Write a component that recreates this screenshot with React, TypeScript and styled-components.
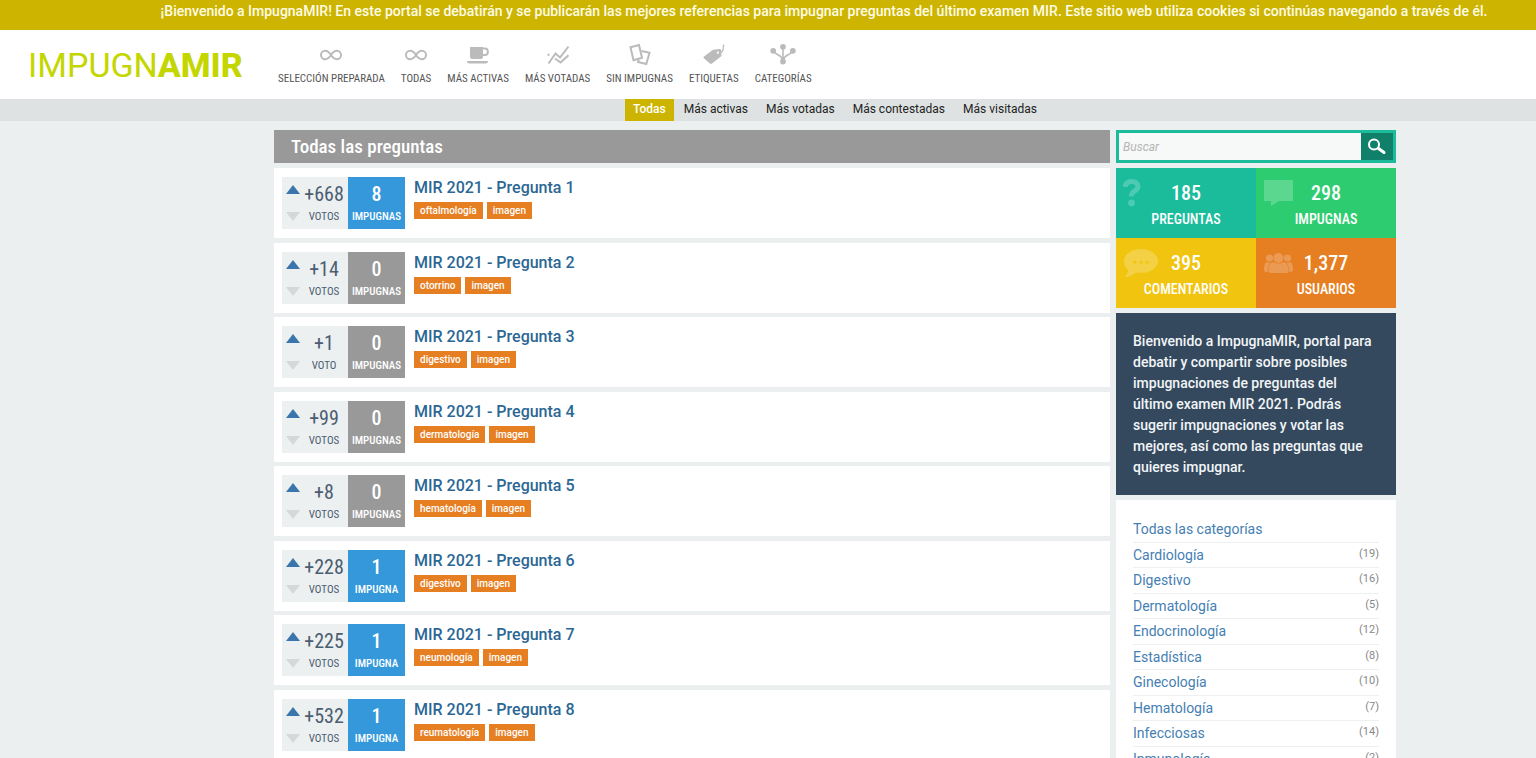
import React from "react";
import styled, { createGlobalStyle } from "styled-components";

const condensed = `"Roboto Condensed", "Liberation Sans Narrow", Roboto, sans-serif`;

const GlobalStyle = createGlobalStyle`
  * { box-sizing: border-box; }
  body {
    margin: 0;
    background: #ebeff0;
    color: #34495e;
    font-family: Roboto, "Liberation Sans", sans-serif;
    font-size: 14px;
  }
  a { text-decoration: none; color: inherit; }
  ul { list-style: none; margin: 0; padding: 0; }
  button { border: 0; padding: 0; cursor: pointer; font: inherit; }
  svg { display: block; }
`;

const Screen = styled.div`
  height: 100vh;
  overflow: hidden;
`;

const Notice = styled.p`
  margin: 0;
  height: 30px;
  padding-left: 112px;
  background: #ccb400;
  color: #fffce6;
  font-size: 14px;
  font-weight: 500;
  line-height: 22px;
  text-align: center;
  white-space: nowrap;
`;

const Header = styled.header`
  display: flex;
  align-items: center;
  height: 69px;
  padding-left: 28px;
  gap: 36px;
  background: #fff;
`;

const Logo = styled.a`
  width: 214px;
  color: #c4d600;
  font-size: 34px;
  line-height: 40px;
  font-weight: 400;
  white-space: nowrap;
  b { font-weight: 800; }
`;

const MainNav = styled.nav`
  display: flex;
  gap: 16px;
`;

const NavLink = styled.a`
  display: flex;
  flex-direction: column;
  align-items: center;
  gap: 4px;
  color: #555;
  font-family: ${condensed};
  font-size: 11px;
  line-height: 16px;
  text-transform: uppercase;
  white-space: nowrap;
  svg { color: #bbb; }
`;

const SubBar = styled.div`
  height: 22px;
  background: #dfe2e3;
`;

const Container = styled.div`
  max-width: 1256px;
  margin: 0 auto;
  padding-left: 134px;
`;

const Tabs = styled.nav`
  display: flex;
  justify-content: center;
  gap: 2px;
`;

const Tab = styled.a<{ $active?: boolean }>`
  padding: 0 8px 2px;
  font-size: 12px;
  line-height: 20px;
  background: ${(p) => (p.$active ? "#ccb400" : "transparent")};
  color: ${(p) => (p.$active ? "#fff" : "#222")};
  font-weight: ${(p) => (p.$active ? 500 : 400)};
`;

const Columns = styled.div`
  display: grid;
  grid-template-columns: 1fr 280px;
  gap: 6px;
  align-items: start;
  padding-top: 9px;
`;

const Heading = styled.h1`
  margin: 0 0 5px;
  padding-left: 17px;
  background: #999;
  color: #fff;
  font-family: ${condensed};
  font-size: 19px;
  font-weight: 500;
  line-height: 33px;
`;

const Question = styled.li`
  display: flex;
  align-items: flex-start;
  height: 70px;
  margin-bottom: 5px;
  padding: 9px 8px;
  background: #fff;
  &:nth-child(even) { margin-bottom: 4px; }
`;

const Votes = styled.div`
  display: flex;
  width: 66px;
  height: 52px;
  padding-left: 4px;
  background: #ecf0f1;
`;

const Arrows = styled.div`
  display: flex;
  flex-direction: column;
  justify-content: space-between;
  padding: 8px 0;
`;

const Arrow = styled.button<{ $down?: boolean }>`
  display: block;
  background: none;
  color: ${(p) => (p.$down ? "#d5d8d9" : "#3a76ac")};
`;

const Counter = styled.div<{ $bg?: string }>`
  display: flex;
  flex-direction: column;
  align-items: center;
  width: ${(p) => (p.$bg ? "57px" : "48px")};
  height: 52px;
  padding-top: 5px;
  background: ${(p) => p.$bg || "transparent"};
  color: ${(p) => (p.$bg ? "#fff" : "#4b5d70")};
  font-family: ${condensed};
  font-size: 11px;
  font-weight: ${(p) => (p.$bg ? 500 : 400)};
  line-height: 22px;
  strong {
    font-size: 20px;
    font-weight: inherit;
    line-height: 24px;
  }
`;

const Summary = styled.div`
  padding: 1px 0 0 9px;
`;

const Title = styled.h2`
  margin: 0 0 4px;
  color: #2b6794;
  font-size: 16px;
  font-weight: 500;
  line-height: 20px;
`;

const Tags = styled.div`
  display: flex;
  gap: 4px;
`;

const Tag = styled.a`
  padding: 0 6px;
  background: #e67e22;
  color: #fff;
  font-size: 10px;
  font-weight: 500;
  line-height: 17px;
`;

const Aside = styled.aside`
  display: flex;
  flex-direction: column;
  gap: 5px;
`;

const Search = styled.form`
  display: flex;
  height: 33px;
  border: 3px solid #1cbb9b;
  background: #f7f8f8;
  input {
    flex: 1;
    min-width: 0;
    border: 0;
    padding: 0 4px;
    background: none;
    font: italic 12px Roboto, sans-serif;
  }
  input::placeholder { color: #b5b5b5; }
  button {
    display: grid;
    place-items: center;
    width: 32px;
    background: #10806a;
    color: #fff;
  }
`;

const Stats = styled.div`
  display: grid;
  grid-template-columns: 1fr 1fr;
`;

const Stat = styled.div<{ $bg: string }>`
  position: relative;
  height: 70px;
  padding-top: 12px;
  background: ${(p) => p.$bg};
  color: #fff;
  font-family: ${condensed};
  font-size: 14px;
  font-weight: 500;
  line-height: 26px;
  text-align: center;
  text-transform: uppercase;
  strong {
    display: block;
    font-size: 20px;
    font-weight: 500;
  }
  svg {
    position: absolute;
    left: 7px;
    top: 9px;
    opacity: 0.22;
  }
`;

const Welcome = styled.p`
  margin: 0;
  padding: 18px 17px 17px;
  background: #34495e;
  color: #f2f5f7;
  font-size: 14px;
  font-weight: 500;
  line-height: 21px;
`;

const Categories = styled.ul`
  padding: 17px;
  background: #fff;
`;

const Category = styled.li`
  display: flex;
  justify-content: space-between;
  height: 26px;
  border-bottom: 1px solid #ecf0f1;
  color: #4580b3;
  font-size: 14px;
  line-height: 25px;
  &:nth-child(even) { height: 25px; }
  span {
    color: #888;
    font-size: 11px;
    line-height: 21px;
  }
`;

const stroke = { fill: "none", stroke: "currentColor", strokeWidth: 2 } as const;

const InfinityIcon = () => (
  <svg width="24" height="24" viewBox="0 0 24 24" aria-hidden="true">
    <path {...stroke} d="M12 12C9.500 8.300 7.800 7.800 6.200 7.800a4.200 4.200 0 0 0 0 8.400c1.600 0 3.300-.5 5.800-4.200s4.200-4.200 5.800-4.200a4.200 4.200 0 0 1 0 8.400c-1.600 0-3.300-.5-5.800-4.200Z" />
  </svg>
);
const CupIcon = () => (
  <svg width="24" height="24" viewBox="0 0 24 24" aria-hidden="true">
    <path fill="currentColor" d="M4 4h13v10a2 2 0 0 1-2 2H6a2 2 0 0 1-2-2ZM1 18h21c0 1.600-1 2.500-2.500 2.500h-16C2 20.500 1 19.600 1 18Z" />
    <path {...stroke} d="M17 5.500h2a2.800 2.800 0 0 1 2.800 2.800v1a2.800 2.800 0 0 1-2.800 2.800h-2" />
  </svg>
);
const ChartIcon = () => (
  <svg width="24" height="24" viewBox="0 0 24 24" aria-hidden="true">
    <path {...stroke} d="M2.500 20.500 9.500 10.500l4.500 4 8.500-11" />
    <path {...stroke} d="M1.500 11.800h2M9 15.500l5.500 4 8-7.200" />
  </svg>
);
const CardsIcon = () => (
  <svg width="24" height="24" viewBox="0 0 24 24" aria-hidden="true">
    <path {...stroke} d="M2.500 4.200 11 2l3 12.800-8.500 2.400Z" />
    <path {...stroke} d="m13.500 8 8 1.800-3.200 11.200-8.300-2 .7-2.800" />
  </svg>
);
const TagIcon = () => (
  <svg width="24" height="24" viewBox="0 0 24 24" aria-hidden="true">
    <path fill="currentColor" fillRule="evenodd" d="m2 13.500 9-6.700 6.500-.8c1 0 1.500.4 1.700 1.400l.3 5.600L10 20.500c-.9.700-1.700.6-2.400-.2l-5.700-5c-.6-.6-.5-1.200.1-1.800ZM15.800 8.600a1.100 1.100 0 1 0 .1 2.200 1.100 1.100 0 0 0-.1-2.200Z" />
    <path {...stroke} strokeWidth="1.300" d="M17 9.500c3 .2 4.200-1.500 4.200-4 0-1.800.2-3 .8-3.800" />
  </svg>
);
const BranchIcon = () => (
  <svg width="26" height="24" viewBox="0 0 26 24" aria-hidden="true">
    <path {...stroke} strokeWidth="1.600" d="M13 4v15M3.500 8.500 C7 13 12 11 13 18.500 C14 11 19 13 22.500 8.500" />
    <g fill="currentColor">
      <circle cx="13" cy="3.800" r="2.900" />
      <circle cx="3.200" cy="7.800" r="2.900" />
      <circle cx="22.800" cy="7.800" r="2.900" />
      <circle cx="13" cy="18.500" r="2.900" />
    </g>
  </svg>
);
const Triangle = ({ down }: { down?: boolean }) => (
  <svg width="14" height="9" viewBox="0 0 14 9" aria-hidden="true">
    <path fill="currentColor" d={down ? "M0 0h14L7 9Z" : "M0 9h14L7 0Z"} />
  </svg>
);
const SearchIcon = () => (
  <svg width="20" height="20" viewBox="0 0 20 20" aria-hidden="true">
    <circle {...stroke} cx="7" cy="7.500" r="5" />
    <path {...stroke} strokeWidth="3" strokeLinecap="round" d="m11.500 11.500 5.500 4" />
  </svg>
);
const QuestionIcon = () => (
  <svg width="18" height="32" viewBox="0 0 18 32" aria-hidden="true">
    <path {...stroke} strokeWidth="5" d="M2 10c.5-3.500 3-5.500 6.700-5.500 3.500 0 6.300 1.800 6.300 5 0 4.700-6.500 4-6.500 9v1" />
    <circle fill="currentColor" cx="8.500" cy="26" r="3.400" />
  </svg>
);
const BubbleIcon = () => (
  <svg width="31" height="32" viewBox="0 0 31 32" aria-hidden="true">
    <path fill="currentColor" d="M1 3h29v21H16l-8 5v-5H1Z" />
  </svg>
);
const CommentIcon = () => (
  <svg width="36" height="32" viewBox="0 0 36 32" aria-hidden="true">
    <path fill="currentColor" fillRule="evenodd" d="M18 2c9.500 0 17 5.500 17 12s-7.500 12-17 12c-1.700 0-3.400-.2-5-.5C10 28 6 30 1.500 30c2-2 3.500-4.500 3.500-7-2.700-2.200-4-5.300-4-9C1 7.500 8.500 2 18 2Zm-7.500 12v2.500h3v-2.500Zm6 0v2.500h3v-2.500Zm6 0v2.500h3v-2.500Z" />
  </svg>
);
const UsersIcon = () => (
  <svg width="31" height="32" viewBox="0 0 31 32" aria-hidden="true">
    <g fill="currentColor">
      <circle cx="15.500" cy="11" r="5" />
      <path d="M7.500 26c-1.500 0-2-1-2-2.500 0-4.500 2-8 5-8.500 3 2 7 2 10 0 3 .5 5 4 5 8.500 0 1.500-.5 2.500-2 2.500Z" />
      <circle cx="6.500" cy="11" r="3.600" />
      <circle cx="24.500" cy="11" r="3.600" />
      <path d="M1 22.500C1 18.500 2 15.500 4 15c1.500.9 3 .9 4.500.3C6 17 5 20 4.700 25 2 25 1 24.500 1 22.500ZM30 22.500c0-4-1-7-3-7.500-1.500.9-3 .9-4.500.3C25 17 26 20 26.300 25c2.700 0 3.700-.5 3.700-2.500Z" />
    </g>
  </svg>
);

const navItems: [string, React.FC][] = [
  ["Selección preparada", InfinityIcon],
  ["Todas", InfinityIcon],
  ["Más activas", CupIcon],
  ["Más votadas", ChartIcon],
  ["Sin impugnas", CardsIcon],
  ["Etiquetas", TagIcon],
  ["Categorías", BranchIcon],
];

const tabs = ["Todas", "Más activas", "Más votadas", "Más contestadas", "Más visitadas"];

const questions = [
  { votes: 668, answers: 8, tag: "oftalmología" },
  { votes: 14, answers: 0, tag: "otorrino" },
  { votes: 1, answers: 0, tag: "digestivo" },
  { votes: 99, answers: 0, tag: "dermatología" },
  { votes: 8, answers: 0, tag: "hematología" },
  { votes: 228, answers: 1, tag: "digestivo" },
  { votes: 225, answers: 1, tag: "neumología" },
  { votes: 532, answers: 1, tag: "reumatología" },
];

const stats: [string, string, string, React.FC][] = [
  ["185", "Preguntas", "#1abc9c", QuestionIcon],
  ["298", "Impugnas", "#2ecc71", BubbleIcon],
  ["395", "Comentarios", "#f1c40f", CommentIcon],
  ["1,377", "Usuarios", "#e67e22", UsersIcon],
];

const categories: [string, number?][] = [
  ["Todas las categorías"],
  ["Cardiología", 19],
  ["Digestivo", 16],
  ["Dermatología", 5],
  ["Endocrinología", 12],
  ["Estadística", 8],
  ["Ginecología", 10],
  ["Hematología", 7],
  ["Infecciosas", 14],
  ["Inmunología", 2],
];

export default function App() {
  return (
    <Screen>
      <GlobalStyle />
      <Notice>
        ¡Bienvenido a ImpugnaMIR! En este portal se debatirán y se publicarán las mejores referencias para
        impugnar preguntas del último examen MIR. Este sitio web utiliza cookies si continúas navegando a
        través de él.
      </Notice>
      <Header>
        <Logo href="#">IMPUGN<b>AMIR</b></Logo>
        <MainNav>
          {navItems.map(([label, Icon]) => (
            <NavLink href="#" key={label}>
              <Icon />
              {label}
            </NavLink>
          ))}
        </MainNav>
      </Header>
      <SubBar>
        <Container>
          <Tabs>
            {tabs.map((label, i) => (
              <Tab href="#" key={label} $active={i === 0}>{label}</Tab>
            ))}
          </Tabs>
        </Container>
      </SubBar>
      <Container>
        <Columns>
          <main>
            <Heading>Todas las preguntas</Heading>
            <ul>
              {questions.map((q, i) => (
                <Question key={i}>
                  <Votes>
                    <Arrows>
                      <Arrow aria-label="Votar a favor"><Triangle /></Arrow>
                      <Arrow $down aria-label="Votar en contra"><Triangle down /></Arrow>
                    </Arrows>
                    <Counter>
                      <strong>+{q.votes}</strong>
                      {q.votes === 1 ? "VOTO" : "VOTOS"}
                    </Counter>
                  </Votes>
                  <Counter $bg={q.answers ? "#3498db" : "#999"}>
                    <strong>{q.answers}</strong>
                    {q.answers === 1 ? "IMPUGNA" : "IMPUGNAS"}
                  </Counter>
                  <Summary>
                    <Title><a href="#">MIR 2021 - Pregunta {i + 1}</a></Title>
                    <Tags>
                      <Tag href="#">{q.tag}</Tag>
                      <Tag href="#">imagen</Tag>
                    </Tags>
                  </Summary>
                </Question>
              ))}
            </ul>
          </main>
          <Aside>
            <Search>
              <input type="text" placeholder="Buscar" aria-label="Buscar" />
              <button type="button" aria-label="Buscar"><SearchIcon /></button>
            </Search>
            <Stats>
              {stats.map(([value, label, bg, Icon]) => (
                <Stat key={label} $bg={bg}>
                  <Icon />
                  <strong>{value}</strong>
                  {label}
                </Stat>
              ))}
            </Stats>
            <Welcome>
              Bienvenido a ImpugnaMIR, portal para debatir y compartir sobre posibles impugnaciones de
              preguntas del último examen MIR 2021. Podrás sugerir impugnaciones y votar las mejores, así
              como las preguntas que quieres impugnar.
            </Welcome>
            <Categories>
              {categories.map(([name, count]) => (
                <Category key={name}>
                  <a href="#">{name}</a>
                  {count !== undefined && <span>({count})</span>}
                </Category>
              ))}
            </Categories>
          </Aside>
        </Columns>
      </Container>
    </Screen>
  );
}
